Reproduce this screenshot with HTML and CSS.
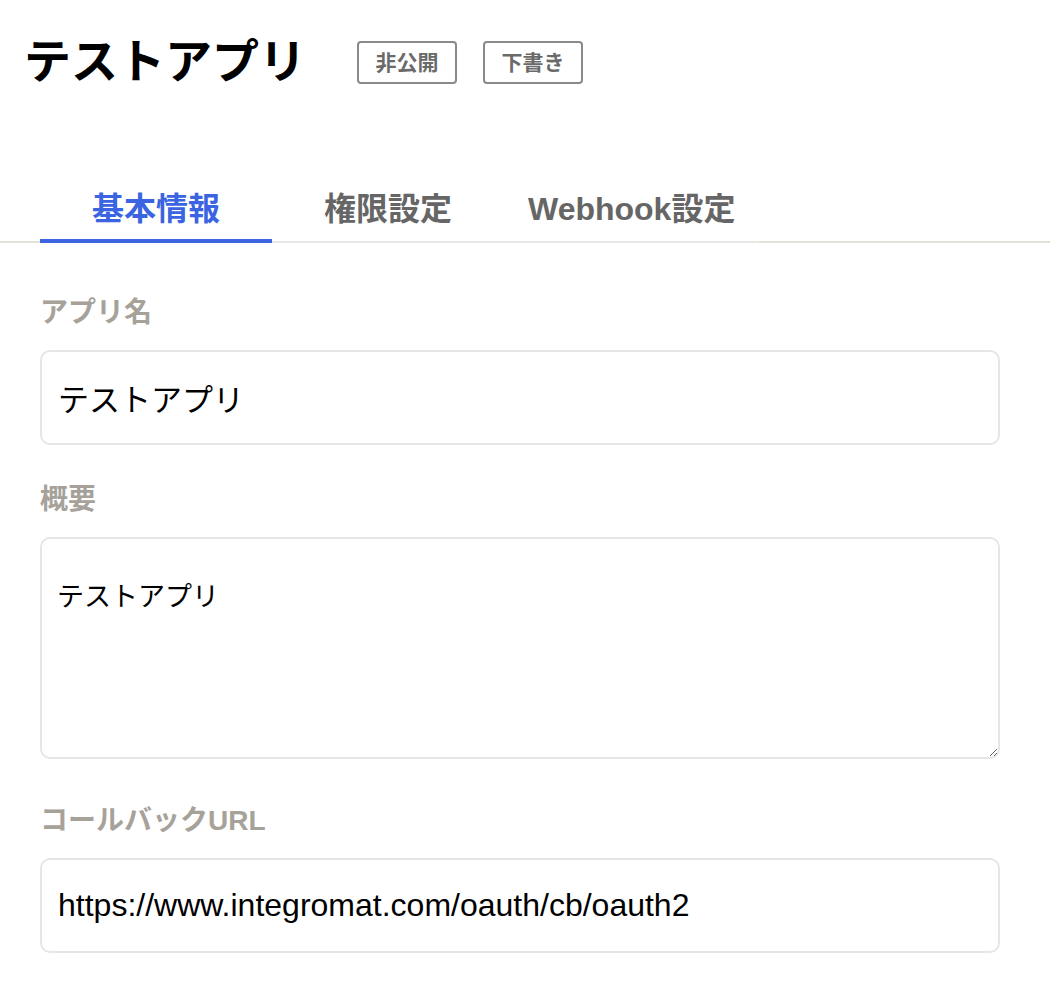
FILE: index.html
```html
<!DOCTYPE html>
<html lang="ja">
<head>
<meta charset="utf-8">
<title>テストアプリ</title>
<link rel="stylesheet" href="styles.css">
</head>
<body>
<header class="header">
  <h1 class="title">テストアプリ</h1>
  <div class="badges">
    <span class="badge">非公開</span>
    <span class="badge">下書き</span>
  </div>
</header>
<nav class="tabbar">
  <div class="tabs">
    <div class="tab tab--active">基本情報</div>
    <div class="tab">権限設定</div>
    <div class="tab">Webhook設定</div>
  </div>
</nav>
<form class="form">
  <div class="field">
    <label class="label" for="name">アプリ名</label>
    <input class="input" id="name" type="text" value="テストアプリ">
  </div>
  <div class="field field--textarea">
    <label class="label" for="desc">概要</label>
    <textarea class="textarea" id="desc">テストアプリ</textarea>
  </div>
  <div class="field">
    <label class="label" for="cb">コールバックURL</label>
    <input class="input input--url" id="cb" type="text" value="https://www.integromat.com/oauth/cb/oauth2">
  </div>
</form>
</body>
</html>
```
FILE: styles.css
```css
* { box-sizing: border-box; }
body {
  margin: 0;
  background: #fff;
  font-family: "Liberation Sans", "Noto Sans CJK JP", sans-serif;
  color: #000;
}
.header {
  display: flex;
  align-items: center;
  height: 64px;
  margin-top: 30px;
  padding-left: 24px;
}
.title {
  margin: 0;
  font-size: 47px;
  line-height: 64px;
  font-weight: 700;
  color: #000;
}
.badges {
  display: flex;
  gap: 26px;
  margin-left: 51px;
}
.badge {
  display: inline-block;
  border: 2px solid #8a8a8a;
  border-radius: 4px;
  padding: 0 16.5px;
  font-size: 21px;
  line-height: 39px;
  font-weight: 700;
  color: #6a6a6a;
}
.tabbar {
  margin-top: 93px;
  border-bottom: 2px solid #e3e0d8;
}
.tabs {
  display: flex;
  padding-left: 40px;
  margin-bottom: -2px;
}
.tab {
  min-width: 232px;
  padding: 0 24px 10px;
  text-align: center;
  font-size: 32px;
  line-height: 44px;
  font-weight: 700;
  color: #666;
  border-bottom: 2px solid #e8e8e8;
}
.tab--active {
  color: #3a64e2;
  padding-bottom: 8px;
  border-bottom: 4px solid #3a64e2;
}
.form {
  padding: 50px 50px 0 40px;
}
.field {
  margin-bottom: 35px;
}
.field--textarea {
  margin-bottom: 42px;
}
.label {
  display: block;
  font-size: 28px;
  line-height: 40px;
  font-weight: 700;
  color: #a6a29a;
  margin-bottom: 17px;
}
.input {
  display: block;
  width: 100%;
  height: 95px;
  border: 2px solid #e6e6e6;
  border-radius: 10px;
  padding: 0 16px;
  font-family: "Liberation Sans", "Noto Sans CJK JP", sans-serif;
  font-size: 31px;
  color: #000;
  background: #fff;
  outline: none;
}
.input--url {
  font-size: 32px;
}
.textarea {
  display: block;
  width: 100%;
  height: 222px;
  border: 2px solid #e6e6e6;
  border-radius: 10px;
  padding: 36px 15px 0;
  font-family: "Noto Sans CJK JP", sans-serif;
  font-size: 27px;
  line-height: 40px;
  color: #000;
  background: #fff;
  outline: none;
  resize: vertical;
}
```
